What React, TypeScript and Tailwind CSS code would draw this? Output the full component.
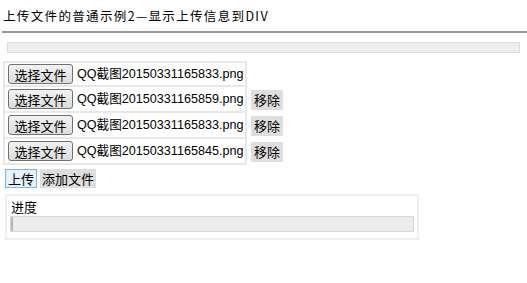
const files = [
  { name: "QQ截图20150331165833.png", removable: false },
  { name: "QQ截图20150331165859.png", removable: true },
  { name: "QQ截图20150331165833.png", removable: true },
  { name: "QQ截图20150331165845.png", removable: true },
];

function ChooseButton() {
  return (
    <button className="w-[65px] h-[20px] shrink-0 whitespace-nowrap rounded-[3px] border border-[#707070] bg-gradient-to-b from-[#f2f2f2] to-[#dcdcdc] text-[13px] leading-none text-black font-['Noto_Sans_CJK_SC',sans-serif]">
      选择文件
    </button>
  );
}

export default function App() {
  return (
    <div className="w-[527px] h-[283px] bg-white text-black font-['Liberation_Sans','Noto_Sans_CJK_SC',sans-serif]">
      <div className="pl-[3px] pt-[8px] h-[31px] text-[12.5px] tracking-[1.35px] leading-[16px] whitespace-nowrap font-['Noto_Sans_CJK_SC',sans-serif]">
        上传文件的普通示例2—显示上传信息到DIV
      </div>
      <div className="ml-[2px] h-[2px] bg-[#9a9a9a]" />
      <div className="mx-[7px] mt-[9px] h-[11px] bg-[#eeeeee] border border-[#dcdcdc]" />

      <div className="mt-[8px] ml-[3px] flex flex-col">
        {files.map((f, i) => (
          <div key={i} className="flex items-center h-[26px]">
            <div
              className={
                "flex items-center gap-[4px] w-[244px] h-[26px] border-2 border-[#e8e8e8] pl-[3px] " +
                (i > 0 ? "border-t-0" : "")
              }
            >
              <ChooseButton />
              <span className="text-[12.6px] whitespace-nowrap">{f.name}</span>
            </div>
            {f.removable && (
              <span className="ml-[4px] h-[20px] px-[3px] bg-[#dedede] text-[13px] leading-[20px] whitespace-nowrap font-['Noto_Sans_CJK_SC',sans-serif]">
                移除
              </span>
            )}
          </div>
        ))}
      </div>

      <div className="mt-[4px] ml-[5px] flex items-center gap-[3px]">
        <button className="h-[19px] px-[2px] border border-[#7eb4ea] bg-[#e5f1fb] text-[13px] leading-[17px] whitespace-nowrap font-['Noto_Sans_CJK_SC',sans-serif]">
          上传
        </button>
        <button className="h-[19px] px-[2px] bg-[#dedede] text-[13px] leading-[19px] whitespace-nowrap font-['Noto_Sans_CJK_SC',sans-serif]">
          添加文件
        </button>
      </div>

      <div className="mt-[6px] ml-[5px] w-[414px] border-2 border-[#eeeeee] px-[3px] pt-[3px] pb-[6px]">
        <div className="text-[13px] leading-[16px] pl-[1px] font-['Noto_Sans_CJK_SC',sans-serif]">进度</div>
        <div className="mt-[1px] h-[16px] border border-[#d9d9d9] bg-[#ececec] flex">
          <div className="w-[2px] bg-[#b5b5b5]" />
        </div>
      </div>
    </div>
  );
}
